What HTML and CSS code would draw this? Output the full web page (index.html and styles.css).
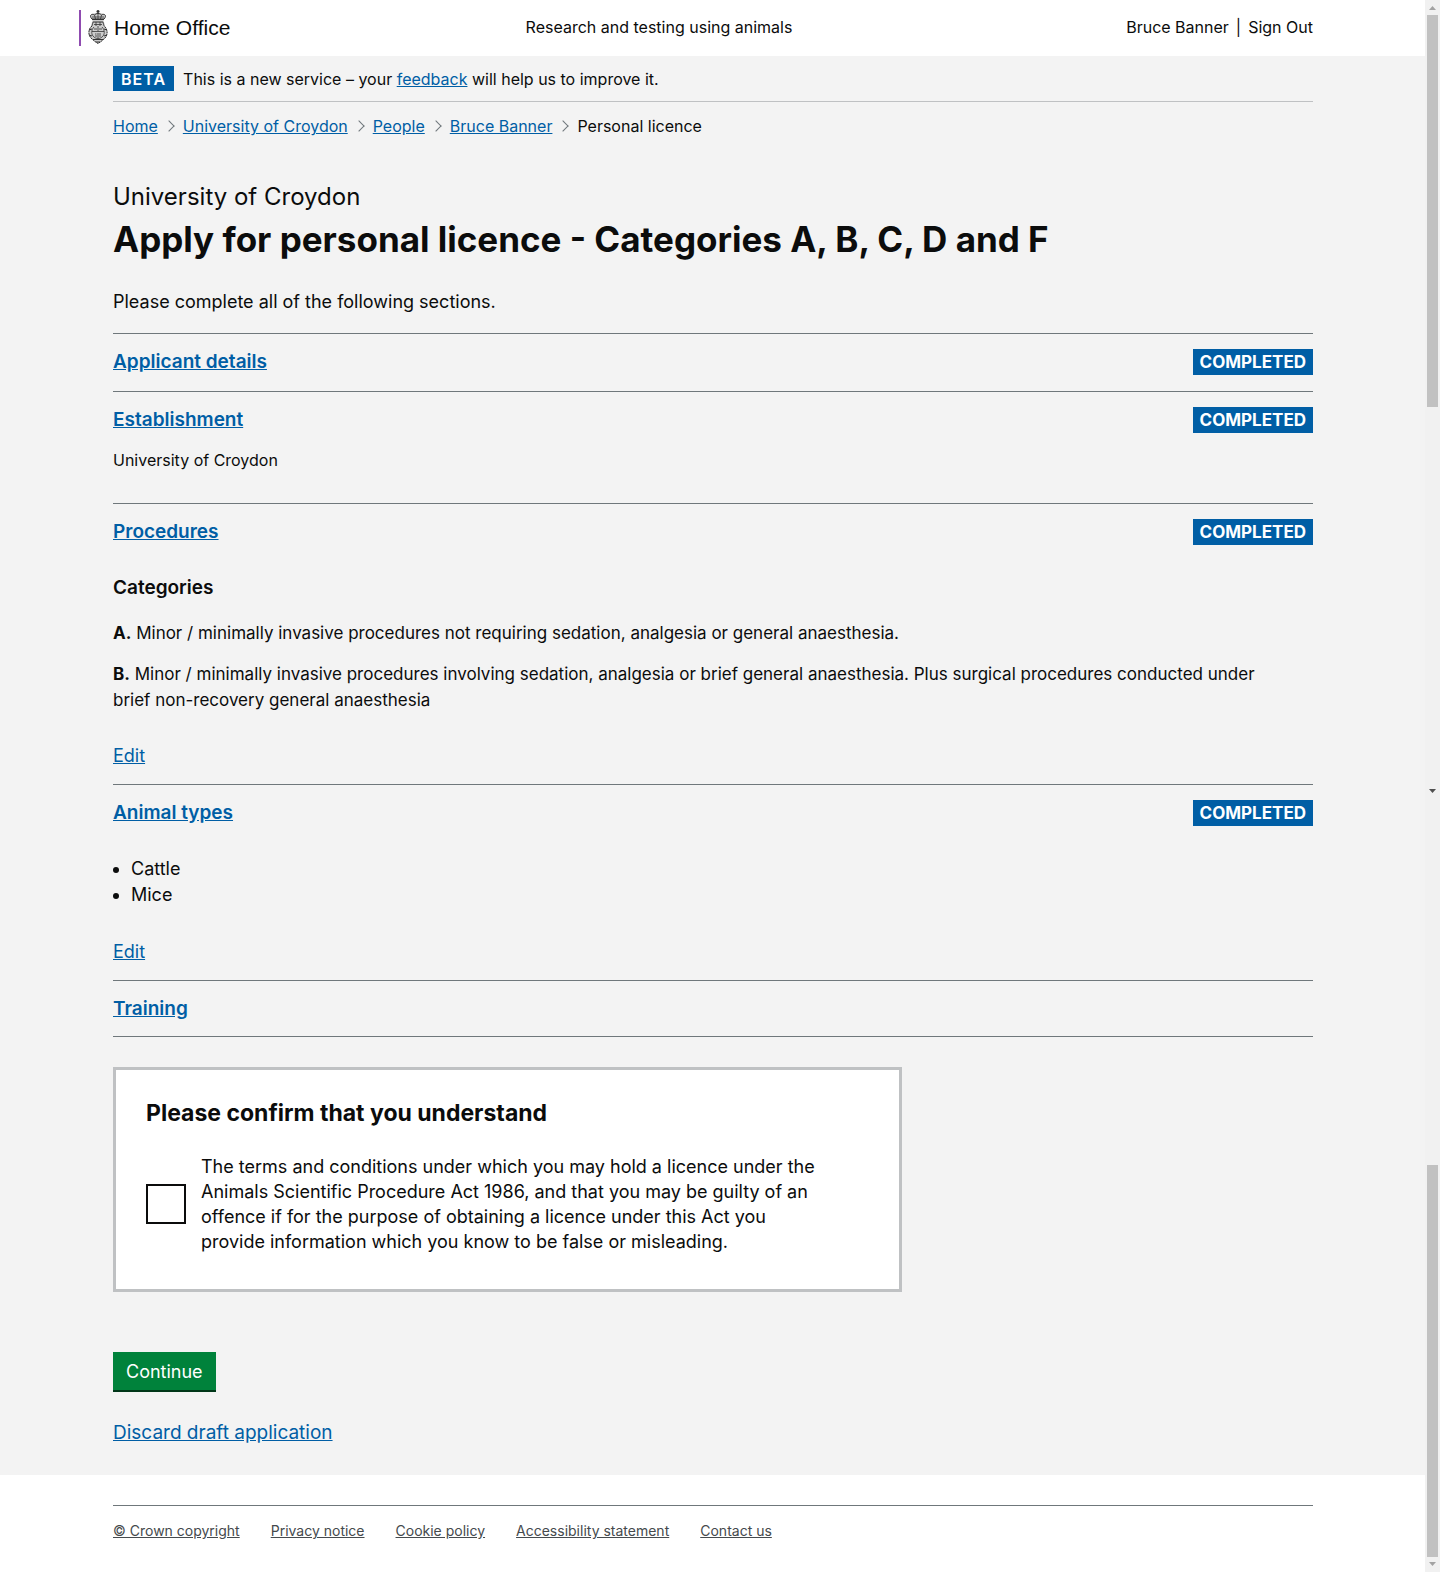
FILE: index.html
```html
<!DOCTYPE html>
<html lang="en">
<head>
<meta charset="utf-8">
<meta name="viewport" content="width=device-width, initial-scale=1">
<title>Personal licence - Research and testing using animals</title>
<link rel="stylesheet" href="styles.css">
</head>
<body>
<div class="page">
  <header class="header">
    <div class="container header-row">
      <a class="logo" href="#">
        <svg class="crest" viewBox="0 0 20 34" width="20" height="34" aria-hidden="true">
          <path d="M10 4c4-2 8 0 7 3l-1.500 3 1.500 6c3 3 3 10-.5 13l-3.500 3-3 2-3-2-3.500-3C0 26 0 19 3 16l1.500-6L3 7c-1-3 3-5 7-3z" fill="#ccc"/>
          <g fill="none" stroke="#333" stroke-width="1">
            <path d="M10 0v4M8.500 1.500h3" stroke-width="1.500"/>
            <path d="M4 9C1 6 3 3 6.500 5 8 3 12 3 13.500 5 17 3 19 6 16 9z"/>
            <path d="M6.500 5l1 4M13.500 5l-1 4M10 4v5M4 7h12" stroke-width=".8"/>
            <path d="M4 9.500h12M5 12h10" stroke-width="1.200"/>
            <path d="M5 12l-1 4M15 12l1 4M8 12v4M12 12v4M6 14.500h8" stroke-width=".8"/>
            <path d="M4 16c-4 3-4 9-1 12l4 3.500 3 2 3-2L17 28c3-3 3-9-1-12" stroke-dasharray="2 .6"/>
            <path d="M10 16v5M6 17c-3 3-3 8 0 10 2 2 6 2 8 0 3-2 3-7 0-10" stroke-width=".8"/>
            <path d="M4 21.500h12M6 19h3M11 19h3M7 24h1.500M11 24h2M7 26h2M11 26h2M10 23v5" stroke-width=".8"/>
            <path d="M1 20l3-1M19 20l-3-1M1 25l3 1M19 25l-3 1M5 29.500h10M8 32h4"/>
          </g>
        </svg>
        <span>Home Office</span>
      </a>
      <a class="service" href="#">Research and testing using animals</a>
      <nav class="account" aria-label="Account"><a href="#">Bruce Banner</a><span>|</span><a href="#">Sign Out</a></nav>
    </div>
  </header>

  <div class="body">
    <div class="container">
      <div class="phase">
        <strong class="phase-tag">BETA</strong>
        <span>This is a new service – your <a href="#">feedback</a> will help us to improve it.</span>
      </div>
      <nav aria-label="Breadcrumb">
        <ol class="breadcrumbs">
          <li><a href="#">Home</a></li>
          <li><a href="#">University of Croydon</a></li>
          <li><a href="#">People</a></li>
          <li><a href="#">Bruce Banner</a></li>
          <li>Personal licence</li>
        </ol>
      </nav>
      <main>
        <p class="caption">University of Croydon</p>
        <h1>Apply for personal licence - Categories A, B, C, D and F</h1>
        <p class="intro">Please complete all of the following sections.</p>

        <ul class="sections">
          <li>
            <div class="section-head"><h3><a href="#">Applicant details</a></h3><span class="badge">COMPLETED</span></div>
          </li>
          <li>
            <div class="section-head"><h3><a href="#">Establishment</a></h3><span class="badge">COMPLETED</span></div>
            <p class="establishment">University of Croydon</p>
          </li>
          <li>
            <div class="section-head"><h3><a href="#">Procedures</a></h3><span class="badge">COMPLETED</span></div>
            <div class="detail">
              <h4>Categories</h4>
              <p><strong>A.</strong> Minor / minimally invasive procedures not requiring sedation, analgesia or general anaesthesia.</p>
              <p><strong>B.</strong> Minor / minimally invasive procedures involving sedation, analgesia or brief general anaesthesia. Plus surgical procedures conducted under brief non-recovery general anaesthesia</p>
            </div>
            <a class="edit" href="#">Edit</a>
          </li>
          <li>
            <div class="section-head"><h3><a href="#">Animal types</a></h3><span class="badge">COMPLETED</span></div>
            <ul class="detail animals">
              <li>Cattle</li>
              <li>Mice</li>
            </ul>
            <a class="edit" href="#">Edit</a>
          </li>
          <li>
            <div class="section-head"><h3><a href="#">Training</a></h3></div>
          </li>
        </ul>

        <form>
          <fieldset class="confirm">
            <h2>Please confirm that you understand</h2>
            <div class="check">
              <input type="checkbox" id="understand">
              <label for="understand">The terms and conditions under which you may hold a licence under the Animals Scientific Procedure Act 1986, and that you may be guilty of an offence if for the purpose of obtaining a licence under this Act you provide information which you know to be false or misleading.</label>
            </div>
          </fieldset>
          <button class="continue" type="submit">Continue</button>
        </form>
        <a class="discard" href="#">Discard draft application</a>
      </main>
    </div>
  </div>

  <footer class="footer">
    <div class="container">
      <ul class="footer-links">
        <li><a href="#">© Crown copyright</a></li>
        <li><a href="#">Privacy notice</a></li>
        <li><a href="#">Cookie policy</a></li>
        <li><a href="#">Accessibility statement</a></li>
        <li><a href="#">Contact us</a></li>
      </ul>
    </div>
  </footer>
</div>

<div class="scrollbars" aria-hidden="true">
  <div class="bar">
    <svg width="15" height="15" viewBox="0 0 15 15"><path d="M4 10h7L7.500 6z" fill="#a3a3a3"/></svg>
    <div class="thumb"></div>
    <div class="track"></div>
    <svg width="15" height="15" viewBox="0 0 15 15"><path d="M4 6h7L7.500 10z" fill="#505050"/></svg>
  </div>
  <div class="bar">
    <div class="track"></div>
    <div class="thumb"></div>
    <svg width="15" height="15" viewBox="0 0 15 15"><path d="M4 5h7L7.500 9z" fill="#a3a3a3"/></svg>
  </div>
</div>
</body>
</html>
```
FILE: styles.css
```css
* { box-sizing: border-box; }

body {
  margin: 0;
  display: flex;
  min-height: 100vh;
  background: #fff;
  color: #0b0c0c;
  font-family: Inter, "Liberation Sans", sans-serif;
  font-size: 18px;
  line-height: 26px;
}

h1, h2, h3, h4, p, ul, ol { margin: 0; padding: 0; }
ul, ol { list-style: none; }
h1, h2, strong { font-weight: 700; }
h3, h4 { font-size: 19px; font-weight: 600; line-height: 25px; }
a { color: #005ea5; }

.page { flex: 1; min-width: 0; }
.container { max-width: 1201px; margin: 0 auto; padding-left: 1px; }

/* Header */
.header { padding: 10px 0; font-size: 16px; }
.header-row {
  display: grid;
  grid-template-columns: 1fr auto 1fr;
  align-items: center;
  height: 36px;
}
.header a { color: #0b0c0c; text-decoration: none; }
.logo {
  display: flex;
  align-items: center;
  gap: 6px;
  height: 36px;
  margin-left: -34px;
  padding-left: 7px;
  border-left: 2px solid #8f4bb0;
  font-family: "Liberation Sans", Arial, sans-serif;
  font-size: 21px;
}
.crest { margin-bottom: 2px; }
.service { margin-right: 108px; line-height: 24px; padding-bottom: 2px; }
.account { display: flex; justify-content: flex-end; gap: 7px; line-height: 24px; padding-bottom: 2px; }

/* Phase banner and breadcrumbs */
.body { background: #f3f3f3; padding: 10px 0 29px; }
.phase {
  display: flex;
  align-items: flex-end;
  gap: 9px;
  padding-bottom: 10px;
  border-bottom: 1px solid #bfc1c3;
  font-size: 16px;
  line-height: 23px;
}
.phase-tag {
  padding: 2px 8px 0;
  background: #005ea5;
  color: #fff;
  font-weight: 600;
  letter-spacing: 1px;
}
.breadcrumbs {
  display: flex;
  padding: 14px 0 1px;
  font-size: 16px;
  line-height: 20px;
}
.breadcrumbs li { display: flex; align-items: center; }
.breadcrumbs li + li::before {
  content: "";
  width: 7px;
  height: 7px;
  margin: 0 10px 0 7px;
  border: solid #6f777b;
  border-width: 1px 1px 0 0;
  transform: rotate(45deg);
}

/* Titles */
.caption { margin-top: 45px; font-size: 24px; line-height: 30px; }
h1 { margin-top: 5px; font-size: 35px; line-height: 45px; }
.intro { margin: 27px 0 18px; }

/* Task list */
.sections { border-bottom: 1px solid #6f777b; }
.sections > li { border-top: 1px solid #6f777b; padding: 15px 0; }
.sections > li:first-child { padding-bottom: 16px; }
.section-head { display: flex; justify-content: space-between; }
.badge {
  padding: 0 7px;
  background: #005ea5;
  color: #fff;
  font-size: 17px;
  font-weight: 700;
}
.establishment { margin: 15px 0; font-size: 16px; line-height: 25px; }
.detail { margin: 30px 0; }
.detail h4 { margin-bottom: 20px; }
.detail p { padding-right: 20px; font-size: 17px; }
.detail p + p { margin-top: 15px; }
.animals { margin-bottom: 31px; padding-left: 18px; list-style: disc; }
.edit { display: block; width: max-content; }

/* Declaration */
.confirm {
  max-width: 789px;
  min-width: 0;
  margin: 30px 0 60px;
  padding: 30px 30px 35px;
  border: 3px solid #bfc1c3;
  background: #fff;
}
h2 { font-size: 23px; line-height: 27px; }
.check {
  display: flex;
  align-items: center;
  gap: 15px;
  margin-top: 27px;
  line-height: 25px;
}
.check input {
  appearance: none;
  flex: none;
  width: 40px;
  height: 40px;
  margin: 0;
  border: 2px solid #0b0c0c;
  background: #fff;
}
.check label { max-width: 625px; }

.continue {
  display: block;
  height: 40px;
  padding: 2px 13px 0;
  border: 0;
  border-bottom: 2px solid #003618;
  background: #00823b;
  color: #fff;
  font: inherit;
}
.discard { display: block; width: max-content; margin-top: 28px; font-size: 19px; }

/* Footer */
.footer { padding-top: 30px; }
.footer-links {
  display: flex;
  gap: 31px;
  padding: 15px 0;
  border-top: 1px solid #6f777b;
  font-size: 14px;
  line-height: 20px;
}
.footer-links a { color: #454a4d; }

/* Scrollbars */
.scrollbars {
  flex: none;
  display: flex;
  flex-direction: column;
  width: 15px;
  background: #f1f1f1;
}
.bar { flex: 1; display: flex; flex-direction: column; }
.bar + .bar { flex: 0.97; }
.bar svg { display: block; flex: none; }
.track { flex: 1; }
.thumb { flex: 0 0 392px; margin: 0 2px; background: #c1c1c1; }
```
